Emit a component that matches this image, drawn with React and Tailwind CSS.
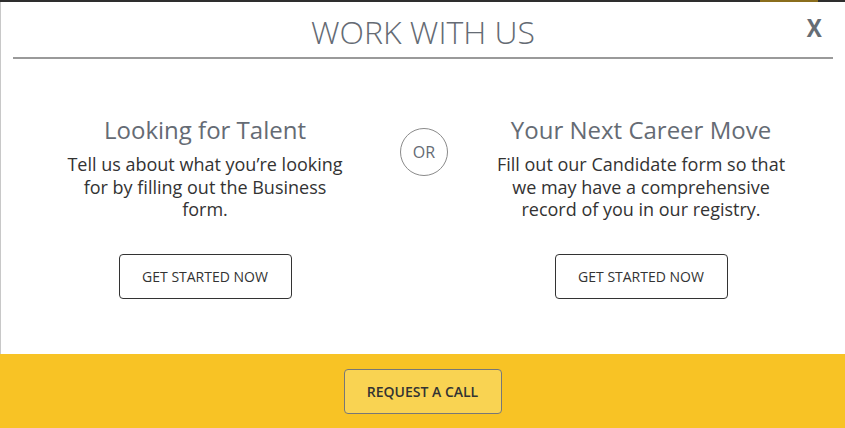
export default function App() {
  const open = { fontFamily: '"Open Sans", "Liberation Sans", sans-serif' }

  return (
    <div className="w-[845px] h-[428px] flex flex-col bg-white overflow-hidden" style={open}>
      {/* ── backdrop strip ─────────────────────────────────────────── */}
      <div className="h-[2px] flex bg-[#2e2e2e]">
        <div className="w-[760px]" />
        <div className="w-[58px] bg-[#8a6d1c]" />
      </div>

      {/* ── modal body ─────────────────────────────────────────────── */}
      <div className="flex-1 flex flex-col border-l border-[#c8c8c8]">
        <div className="relative h-[57px] flex items-end justify-center mx-[12px] border-b-2 border-[#9a9a9a]">
          <h1 className="text-[32px] leading-none font-light text-[#656b74] mb-[9px]">
            WORK WITH US
          </h1>
          <button className="absolute right-[10px] top-[13px] text-[25px] font-bold leading-none text-[#666d75] scale-x-[0.9]">
            X
          </button>
        </div>

        <div className="flex pl-[55px] pt-[56px]">
          <div className="w-[298px] flex flex-col items-center text-center">
            <h2 className="text-[24px] leading-[30px] text-[#656b74]">Looking for Talent</h2>
            <p className="w-[286px] mt-[8px] text-[18px] leading-[22.5px] text-[#333]">
              Tell us about what you’re looking for by filling out the Business form.
            </p>
            <button className="mt-[33px] w-[173px] h-[45px] rounded-[4px] border border-[#333] text-[14px] text-[#333]">
              GET STARTED NOW
            </button>
          </div>

          <div className="w-[48px] ml-[46px] mr-[44px] pt-[13px]">
            <div className="w-[48px] h-[48px] rounded-full border border-[#8a8a8a] flex items-center justify-center text-[16px] text-[#656b74]">
              OR
            </div>
          </div>

          <div className="w-[298px] flex flex-col items-center text-center">
            <h2 className="text-[24px] leading-[30px] text-[#656b74]">Your Next Career Move</h2>
            <p className="w-[298px] mt-[8px] text-[18px] leading-[22.5px] text-[#333]">
              Fill out our Candidate form so that we may have a comprehensive record of you in our registry.
            </p>
            <button className="mt-[33px] w-[173px] h-[45px] rounded-[4px] border border-[#333] text-[14px] text-[#333]">
              GET STARTED NOW
            </button>
          </div>
        </div>
      </div>

      {/* ── footer bar ─────────────────────────────────────────────── */}
      <div className="h-[74px] bg-[#f8c325] flex items-center justify-center">
        <button className="w-[158px] h-[45px] rounded-[4px] border border-[#777] bg-[#f9d352] text-[14px] font-semibold text-[#333]">
          REQUEST A CALL
        </button>
      </div>
    </div>
  )
}
